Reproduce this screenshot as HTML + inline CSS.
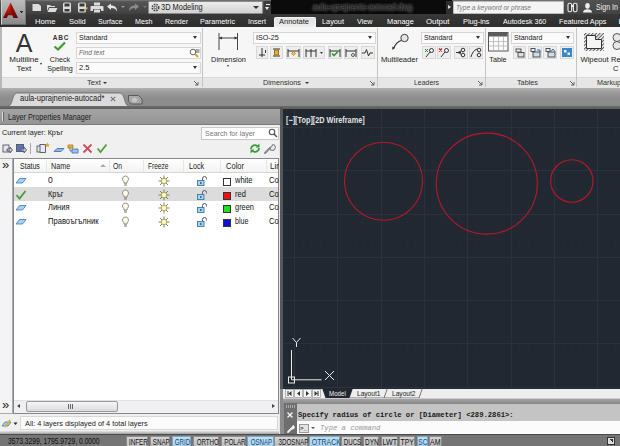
<!DOCTYPE html>
<html><head><meta charset="utf-8">
<style>
*{box-sizing:border-box;margin:0;padding:0}
html,body{width:620px;height:446px;overflow:hidden;background:#8a8a8a;font-family:"Liberation Sans","DejaVu Sans",sans-serif;font-size:8px;color:#222}
.a{position:absolute;white-space:nowrap}
#title{left:0;top:0;width:620px;height:14px;background:linear-gradient(#7a7a7a,#555 12%,#404040)}
#tabs{left:0;top:14px;width:620px;height:13px;background:linear-gradient(#383838,#2d2d2d)}
.tab{top:16px;height:12px;line-height:12px;color:#fff;font-size:8px;position:absolute;white-space:nowrap}
#ribbon{left:0;top:27px;width:620px;height:50px;background:#f6f6f6}
#rtitle{left:0;top:76.5px;width:620px;height:11.5px;background:#e6e6e6;border-top:1px solid #dadada}
.sep{top:28px;width:1px;height:59px;background:#c4c4c4}
.pt{top:78px;height:10px;line-height:10px;font-size:7.5px;color:#333}
.combo{height:11px;background:#fbfbfb;border:1px solid #d6d6d6;font-size:7.5px;line-height:10px;padding-left:2px;color:#222}
.combo:after{content:"";position:absolute;right:3px;top:3px;border:2.5px solid transparent;border-top:3px solid #333;border-bottom:0}
.lbl{font-size:7.5px;line-height:9.3px;margin-top:.5px;text-align:center;color:#222}
.ib{width:12px;height:11px;border:1px solid #d8d8d8;background:#eee}
#band{left:0;top:88px;width:620px;height:18px;background:linear-gradient(#b2b2b2,#9a9a9a 25%,#8e8e8e 55%,#8a8a8a)}
.hs{top:160px;width:1px;height:12px;background:#e6e6e6}
.th{top:161px;font-size:8.5px;line-height:11px;color:#222}
.td{font-size:8.5px;line-height:11px;color:#111}
.nc:after{display:none}
.sbb{top:435.5px;height:11px;background:linear-gradient(#d4d4d4,#bcbcbc);border:1px solid #8c8c8c;border-bottom:0}
.sbb.on{background:linear-gradient(#c0e0f2,#a8d2ea);border-color:#7aa6c2}
.sbt{top:436.5px;font-size:8.5px;line-height:10px;text-align:center;color:#151515}
.sbt.on{color:#1b4a78}
</style></head><body>
<!-- TITLE BAR -->
<div class="a" id="title"></div>
<div class="a" style="left:271px;top:0;width:181px;height:14px;background:#0b0b0b"></div>
<div class="a" style="left: 312.5px; top: 2px; font-size: 8.5px; line-height: 11px; color: rgb(16, 16, 16); text-shadow: rgb(119, 119, 119) 0px 0px 2px, rgb(106, 106, 106) 0px 0px 3px, rgb(85, 85, 85) 0px 0px 4px; transform: scaleX(0.903); transform-origin: 0px 0px;">aula-uprajnenie-autocad.dwg</div>
<!-- quick access icons -->
<svg class="a" style="left:28px;top:1px" width="120" height="13" viewBox="0 0 120 13">
 <g fill="#dcdcdc" stroke="none">
  <path d="M4.500 3h6l2.500 2v5h-8.500z"></path>
  <path d="M19 4h3l1 1h4v1h-6l-2 4zM21.5 7h8l-2 4h-8z"></path>
  <rect x="35" y="1.5" width="8" height="10" rx="1.5"></rect>
  <rect x="50" y="1.5" width="8" height="10" rx="1.5"></rect>
  <path d="M66 1.500h6v3h-6zM63.500 5h11a1 1 0 0 1 1 1v4h-2.500v-2h-8v2h-2.500v-4a1 1 0 0 1 1-1zM66 8.500h6v3h-6z"></path>
 </g>
 <g fill="#3a3a3a"><rect x="36.500" y="2.500" width="5" height="3"></rect><rect x="36.500" y="8" width="5" height="2.500"></rect><rect x="51.500" y="2.500" width="5" height="3"></rect><rect x="51.500" y="8" width="5" height="2.500"></rect></g>
 <path d="M56 9l3-3 1 1-3 3z" fill="#e8a33d"></path>
 <path d="M79 5.500l4-3v2c4 0 6 2 6 6-1-2.500-3-3.500-6-3.500v2z" fill="#e6e6e6"></path>
 <path d="M93 5l2 2 2-2z" fill="#999"></path>
 <path d="M111 5.500l-4-3v2c-4 0-6 2-6 6 1-2.500 3-3.500 6-3.500v2z" fill="#8a8a8a"></path>
 <path d="M115 5l2 2 2-2z" fill="#777"></path>
</svg>
<!-- workspace dropdown -->
<div class="a" style="left:148px;top:1px;width:115px;height:13px;background:linear-gradient(#ececec,#d2d2d2);border:1px solid #8a8a8a;border-radius:1px"></div>
<svg class="a" style="left:150px;top:2px" width="11" height="11" viewBox="0 0 11 11"><circle cx="5.500" cy="5.500" r="3.200" fill="none" stroke="#444" stroke-width="1.600" stroke-dasharray="1.600 1"></circle><circle cx="5.500" cy="5.500" r="1.300" fill="none" stroke="#444" stroke-width=".8"></circle></svg>
<div class="a" style="left: 161px; top: 2px; font-size: 8.5px; line-height: 11px; color: rgb(28, 28, 28); transform: scaleX(0.875); transform-origin: 0px 0px;">3D Modeling</div>
<div class="a" style="left:253px;top:6px;border:3px solid transparent;border-top:3.500px solid #333;border-bottom:0"></div>
<div class="a" style="left:264px;top:1px;width:7px;height:13px;background:#3c3c3c;border-radius:1px"></div>
<div class="a" style="left:265px;top:7px;border:2.500px solid transparent;border-top:3px solid #eee;border-bottom:0"></div>
<div class="a" style="left:265.500px;top:4px;width:4px;height:1px;background:#eee"></div>
<!-- search -->
<div class="a" style="left:446px;top:1px;width:7px;height:13px;background:#2e2e2e"></div>
<div class="a" style="left:448px;top:4.500px;border:2.500px solid transparent;border-left:3.500px solid #ddd;border-right:0"></div>
<div class="a box" style="left:453px;top:1px;width:111px;height:13px;background:#f4f4f4;border:1px solid #bbb;border-radius:1px;font-size:8px;line-height:11px;font-style:italic;color:#777;padding-left:2px"><span style="display: inline-block; transform: scaleX(0.816); transform-origin: 0px 0px;">Type a keyword or phrase</span></div>
<div class="a" style="left:564px;top:0;width:56px;height:14.500px;background:linear-gradient(#525252,#424242)"></div>
<svg class="a" style="left:566px;top:2px" width="30" height="11" viewBox="0 0 30 11">
 <g fill="#3a3a3a" stroke="#eee" stroke-width="1.100"><rect x="2" y="1.200" width="3.600" height="8.600" rx="1.600"></rect><rect x="7.400" y="1.200" width="3.600" height="8.600" rx="1.600"></rect></g><rect x="5" y="3" width="3" height="2" fill="#eee"></rect>
 <g fill="#eee"><ellipse cx="21.500" cy="3.800" rx="2.300" ry="2.900"></ellipse><path d="M17 10.500c0-2.600 2-3.300 4.500-3.300s4.500.7 4.500 3.300z"></path></g></svg>
<div class="a" style="left: 596px; top: 2px; font-size: 8.5px; line-height: 11px; color: rgb(240, 240, 240); transform: scaleX(0.831); transform-origin: 0px 0px;">Sign In</div>
<!-- MENU TABS -->
<div class="a" id="tabs"></div>
<div class="a" style="left:273.500px;top:16.500px;width:42px;height:11px;background:linear-gradient(#e2e2e2,#eee);border:1px solid #f6f6f6;border-bottom:0;border-radius:2px 2px 0 0"></div>
<div class="tab" style="left: 35px; transform: scaleX(0.96); transform-origin: 0px 0px;">Home</div>
<div class="tab" style="left: 69px; transform: scaleX(0.941); transform-origin: 0px 0px;">Solid</div>
<div class="tab" style="left: 98px; transform: scaleX(0.888); transform-origin: 0px 0px;">Surface</div>
<div class="tab" style="left: 135px; transform: scaleX(0.895); transform-origin: 0px 0px;">Mesh</div>
<div class="tab" style="left: 165px; transform: scaleX(0.876); transform-origin: 0px 0px;">Render</div>
<div class="tab" style="left: 200px; transform: scaleX(0.905); transform-origin: 0px 0px;">Parametric</div>
<div class="tab" style="left: 248px; transform: scaleX(0.899); transform-origin: 0px 0px;">Insert</div>
<div class="tab" style="left: 279px; color: rgb(34, 34, 34); transform: scaleX(0.937); transform-origin: 0px 0px;">Annotate</div>
<div class="tab" style="left: 322px; transform: scaleX(0.915); transform-origin: 0px 0px;">Layout</div>
<div class="tab" style="left: 357px; transform: scaleX(0.901); transform-origin: 0px 0px;">View</div>
<div class="tab" style="left: 387px; transform: scaleX(0.925); transform-origin: 0px 0px;">Manage</div>
<div class="tab" style="left: 426px; transform: scaleX(0.979); transform-origin: 0px 0px;">Output</div>
<div class="tab" style="left: 463px; transform: scaleX(0.917); transform-origin: 0px 0px;">Plug-ins</div>
<div class="tab" style="left: 503px; transform: scaleX(0.884); transform-origin: 0px 0px;">Autodesk 360</div>
<div class="tab" style="left: 559px; transform: scaleX(0.913); transform-origin: 0px 0px;">Featured Apps</div>
<div class="tab" style="left:618.500px">E</div>
<!-- app button -->
<div class="a" style="left:1px;top:0;width:25px;height:24.500px;background:linear-gradient(#bcbcbc,#a6a6a6 50%,#888);border:1px solid #d0d0d0;border-top:0;border-right-color:#777;border-bottom-color:#666"></div>
<svg class="a" style="left:0;top:0" width="26" height="25" viewBox="0 0 26 25">
 <defs><linearGradient id="ag" x1="0" y1="0" x2="0" y2="1"><stop offset="0" stop-color="#e83020"></stop><stop offset=".55" stop-color="#b8140c"></stop><stop offset="1" stop-color="#5e0a06"></stop></linearGradient></defs>
 <path d="M10.500 2.500L18 18h-4.500l-1.100-2.800h-4.200L6.800 18H3z" fill="url(#ag)"></path>
 <path d="M10.500 2.500L18 18h-4.500l-3-8.500z" fill="#6a0a06" opacity=".55"></path>
 <path d="M19.800 11l1.700 2.200 1.700-2.200z" fill="#1a1a1a"></path>
</svg>
<!-- RIBBON -->
<div class="a" id="ribbon"></div>
<div class="a" id="rtitle"></div>
<div class="a" style="left:0;top:27px;width:2px;height:61px;background:#b8b8b8"></div>
<div class="a sep" style="left:202px"></div>
<div class="a sep" style="left:377px"></div>
<div class="a sep" style="left:485px"></div>
<div class="a sep" style="left:576px"></div>
<!-- Text panel -->
<div class="a" style="left:14px;top:28.500px;width:20px;font-size:25px;line-height:28px;color:#333;text-align:center">A</div>
<div class="a lbl" style="left: 4px; top: 54px; width: 40px; transform: scaleX(1.072); transform-origin: 50% 0px;">Multiline<br>Text</div>
<div class="a" style="left:40px;top:63px;border:1.500px solid transparent;border-top:2px solid #333;border-bottom:0"></div>
<div class="a" style="left:51px;top:34px;width:20px;font-size:6.500px;line-height:7px;font-weight:bold;letter-spacing:.8px;color:#333;text-align:center">ABC</div>
<svg class="a" style="left:53px;top:41px" width="14" height="10" viewBox="0 0 14 10"><path d="M1.500 5.500l3.500 3L12 1.500" fill="none" stroke="#3c9b2c" stroke-width="2.200"></path></svg>
<div class="a lbl" style="left: 44px; top: 54px; width: 32px; transform: scaleX(0.952); transform-origin: 50% 0px;">Check<br>Spelling</div>
<div class="a combo" style="left:76px;top:32px;width:125px;height:12px"><span style="display: inline-block; transform: scaleX(0.936); transform-origin: 0px 0px;">Standard</span></div>
<div class="a combo nc" style="left:76px;top:47px;width:125px;height:12px;font-style:italic;color:#666"><span style="display: inline-block; transform: scaleX(0.88); transform-origin: 0px 0px;">Find text</span></div>
<svg class="a" style="left:189px;top:48px" width="11" height="10" viewBox="0 0 11 10"><circle cx="4" cy="4" r="2.800" fill="#fff" stroke="#666" stroke-width="1"></circle><path d="M6 6l3 3" stroke="#c9a227" stroke-width="1.800"></path><path d="M6.500 2h4M6.500 4h4" stroke="#555" stroke-width="1"></path></svg>
<div class="a combo" style="left:76px;top:62px;width:125px;height:12px"><span style="display: inline-block; transform: scaleX(1.006); transform-origin: 0px 0px;">2.5</span></div>
<div class="a pt" style="left: 87px; transform: scaleX(1.01); transform-origin: 0px 0px;">Text</div>
<div class="a" style="left:103px;top:82px;border:2px solid transparent;border-top:2.500px solid #333;border-bottom:0"></div>
<svg class="a" style="left:194px;top:81px" width="5" height="5" viewBox="0 0 5 5"><path d="M0 0l4 4M4 1v3h-3" fill="none" stroke="#555" stroke-width=".9"></path></svg>
<!-- Dimensions panel -->
<svg class="a" style="left:218px;top:33px" width="21" height="18" viewBox="0 0 21 18"><path d="M1 0v17M19.500 0v17M1 5h18.500" fill="none" stroke="#444" stroke-width="1"></path><path d="M1 5l3-1.500v3zM19.500 5l-3-1.500v3z" fill="#333"></path></svg>
<div class="a lbl" style="left: 208px; top: 54px; width: 41px; transform: scaleX(0.985); transform-origin: 50% 0px;">Dimension</div>
<div class="a" style="left:227px;top:65px;border:1.500px solid transparent;border-top:2px solid #333;border-bottom:0"></div>
<div class="a combo" style="left:253px;top:32px;width:123px;height:12px"><span style="display: inline-block; transform: scaleX(0.955); transform-origin: 0px 0px;">ISO-25</span></div>
<div class="a ib" style="left:256px;top:46px;width:12px;height:13px"></div>
<div class="a ib" style="left:270px;top:46px;width:13px;height:13px"></div>
<div class="a ib" style="left:286px;top:46px;width:15px;height:13px"></div>
<div class="a ib" style="left:303px;top:46px;width:22px;height:13px"></div>
<div class="a ib" style="left:328px;top:46px;width:14px;height:13px"></div>
<div class="a ib" style="left:344px;top:46px;width:14px;height:13px"></div>
<div class="a ib" style="left:361px;top:46px;width:14px;height:13px"></div>
<svg class="a" style="left:256px;top:46px" width="120" height="13" viewBox="0 0 120 13">
 <g fill="none" stroke="#333" stroke-width="1">
  <path d="M6 2v9M3 9h6M9.500 4v3"></path>
  <path d="M17 3h7M17 10h7"></path><rect x="18.500" y="4" width="4" height="5" fill="#e0b040" stroke="#a07010"></rect>
  <path d="M32 3v8M43 3v8M32 5h11"></path><path d="M37.500 5.500l2 2-2 2-2-2z" fill="#f0c040" stroke="#b08010" stroke-width=".7"></path>
  <path d="M50 3v8M55 3v8M60 3v8M50 5h10"></path>
  <path d="M74 3v8M84 3v8M74 5h10"></path>
  <path d="M90 3v8M100 3v8M90 5h10"></path><circle cx="97" cy="9" r="1.500" stroke-width=".8"></circle>
  <path d="M106 7h3l1.500-3.500 2 6.500 1.500-3h3"></path>
 </g>
 <path d="M76 7.500l2 2 4-4" fill="none" stroke="#2e9a2e" stroke-width="1.600"></path>
 <path d="M64 6l1.500 2 1.500-2z" fill="#333"></path>
</svg>
<div class="a pt" style="left: 263px; transform: scaleX(0.967); transform-origin: 0px 0px;">Dimensions</div>
<div class="a" style="left:305px;top:82px;border:2px solid transparent;border-top:2.500px solid #333;border-bottom:0"></div>
<svg class="a" style="left:370px;top:81px" width="5" height="5" viewBox="0 0 5 5"><path d="M0 0l4 4M4 1v3h-3" fill="none" stroke="#555" stroke-width=".9"></path></svg>
<!-- Leaders -->
<svg class="a" style="left:391px;top:32px" width="19" height="19" viewBox="0 0 19 19"><circle cx="13.500" cy="6" r="3.700" fill="#e4e4e4" stroke="#444" stroke-width="1"></circle><path d="M10.500 8.500c-4 1-6.500 4-8 8.500" fill="none" stroke="#333" stroke-width="1.200"></path><path d="M1.200 18l.2-3.500 2.300 1.200z" fill="#333"></path></svg>
<div class="a lbl" style="left: 378px; top: 54px; width: 43px; transform: scaleX(1.011); transform-origin: 50% 0px;">Multileader</div>
<div class="a combo" style="left:421px;top:32px;width:63px;height:12px"><span style="display: inline-block; transform: scaleX(0.936); transform-origin: 0px 0px;">Standard</span></div>
<div class="a ib" style="left:422px;top:46px;width:14px;height:13px"></div>
<div class="a ib" style="left:437px;top:46px;width:14px;height:13px"></div>
<div class="a ib" style="left:454px;top:46px;width:14px;height:13px"></div>
<div class="a ib" style="left:469px;top:46px;width:14px;height:13px"></div>
<svg class="a" style="left:422px;top:46px" width="62" height="13" viewBox="0 0 62 13">
 <g fill="none" stroke="#333" stroke-width="1">
  <circle cx="9.500" cy="4.500" r="2"></circle><path d="M8 6l-4 5"></path>
  <circle cx="24.500" cy="4.500" r="2"></circle><path d="M23 6l-4 5"></path>
  <circle cx="41" cy="4" r="1.800"></circle><circle cx="41" cy="9" r="1.800"></circle><path d="M34 6.500h5M39 5l-3 1.500 3 1.500"></path>
  <circle cx="57" cy="4" r="1.800"></circle><circle cx="57" cy="9" r="1.800"></circle><path d="M49 11c1-4 3-7 6-8"></path>
 </g>
 <path d="M3 3l3 3M6 3l-3 3" stroke="#2a8a2a" stroke-width="1" fill="none"></path>
 <path d="M17 2.500l3 3M20 2.500l-3 3" stroke="#d02020" stroke-width="1.200" fill="none"></path>
</svg>
<div class="a pt" style="left: 414px; transform: scaleX(0.922); transform-origin: 0px 0px;">Leaders</div>
<svg class="a" style="left:478px;top:81px" width="5" height="5" viewBox="0 0 5 5"><path d="M0 0l4 4M4 1v3h-3" fill="none" stroke="#555" stroke-width=".9"></path></svg>
<!-- Tables -->
<svg class="a" style="left:488px;top:32px" width="21" height="20" viewBox="0 0 21 20"><rect x=".5" y=".5" width="19.500" height="18.500" fill="#fafafa" stroke="#555"></rect><rect x="1" y="1" width="18.500" height="3.500" fill="#5a5a5a"></rect><path d="M1 9.500h19M1 14h19M5.500 5v14M10.500 5v14M15.500 5v14" stroke="#b4b4b4" stroke-width=".8" fill="none"></path></svg>
<div class="a lbl" style="left: 486px; top: 54px; width: 24px; transform: scaleX(0.964); transform-origin: 50% 0px;">Table</div>
<div class="a combo" style="left:511px;top:32px;width:63px;height:12px"><span style="display: inline-block; transform: scaleX(0.936); transform-origin: 0px 0px;">Standard</span></div>
<div class="a ib" style="left:513px;top:46px;width:13px;height:13px"></div>
<div class="a ib" style="left:528px;top:46px;width:14px;height:13px"></div>
<div class="a ib" style="left:543px;top:46px;width:14px;height:13px"></div>
<div class="a ib" style="left:560px;top:46px;width:14px;height:13px"></div>
<svg class="a" style="left:513px;top:46px" width="62" height="13" viewBox="0 0 62 13">
 <g fill="none" stroke="#444" stroke-width=".9">
  <rect x="3" y="3" width="5" height="3"></rect><rect x="5" y="6.500" width="6" height="4.500" fill="#ddd"></rect>
  <rect x="18" y="2.500" width="4" height="3"></rect><rect x="20" y="6" width="7" height="5" fill="#cde"></rect>
  <rect x="33" y="2.500" width="4" height="3"></rect><rect x="35" y="6" width="7" height="5" fill="#cde"></rect>
 </g>
 <path d="M24 4h3v2" stroke="#2a6ab0" fill="none" stroke-width="1"></path><path d="M38 5.500l2-2.500 2 2.500" stroke="#2a6ab0" fill="none" stroke-width="1"></path>
 <rect x="49" y="2" width="10" height="9" fill="#3a86c8"></rect><path d="M51 4h2.500v2.500h-2.500zM54.500 6.500h2.500v2.500h-2.500z" fill="#e8f2fb"></path>
</svg>
<div class="a pt" style="left: 517px; transform: scaleX(0.964); transform-origin: 0px 0px;">Tables</div>
<svg class="a" style="left:570px;top:81px" width="5" height="5" viewBox="0 0 5 5"><path d="M0 0l4 4M4 1v3h-3" fill="none" stroke="#555" stroke-width=".9"></path></svg>
<!-- Markup -->
<svg class="a" style="left:583px;top:32px" width="22" height="20" viewBox="0 0 22 20">
 <defs><pattern id="hp" width="2.500" height="2.500" patternUnits="userSpaceOnUse" patternTransform="rotate(45)"><rect width="1" height="2.500" fill="#555"></rect></pattern></defs>
 <rect x="1" y="1" width="20" height="18" fill="url(#hp)"></rect>
 <path d="M3.500 3.500h9v4h6v9h-15z" fill="#f4f4f4" stroke="#333" stroke-width="1"></path></svg>
<div class="a lbl" style="left: 578px; top: 54px; width: 33px; transform: scaleX(1.025); transform-origin: 50% 0px;">Wipeout</div>
<svg class="a" style="left:611px;top:33px" width="9" height="18" viewBox="0 0 9 18"><circle cx="6" cy="4.500" r="4" fill="#e8e8e8" stroke="#555"></circle><circle cx="6" cy="12.500" r="4" fill="#e8e8e8" stroke="#555"></circle></svg>
<div class="a lbl" style="left:611px;top:54px;text-align:left">Re<br>&nbsp;C</div>
<div class="a pt" style="left: 597px; transform: scaleX(0.959); transform-origin: 0px 0px;">Markup</div>
<!-- FILE TAB BAND -->
<div class="a" id="band"></div>
<svg class="a" style="left:6px;top:91px" width="140" height="16" viewBox="0 0 140 16">
 <path d="M0 15.500c4 0 5-2 6.500-7s2.500-6.500 6-6.500h100c3.500 0 4.500 1.500 6 6.500s2.500 7 6.500 7z" fill="#dadada" stroke="#666" stroke-width=".8"></path>
 <path d="M122.500 4.500h10l3.500 3.500v5h-11l-2.500-3z" fill="#a8a8a8" stroke="#5a5a5a" stroke-width="1" stroke-linejoin="round"></path>
 <circle cx="128.500" cy="9" r="2.500" fill="#c4c4c4"></circle>
</svg>
<div class="a" style="left: 20px; top: 93px; font-size: 8.5px; line-height: 11px; color: rgb(26, 26, 26); transform: scaleX(0.889); transform-origin: 0px 0px;">aula-uprajnenie-autocad*</div>
<svg class="a" style="left:110px;top:96px" width="6" height="6" viewBox="0 0 6 6"><path d="M.8.800l4.400 4.400M5.200.800L.8 5.200" stroke="#777" stroke-width="1.100"></path></svg>
<div class="a" style="left:0;top:105.500px;width:620px;height:4px;background:linear-gradient(#6c6c6c,#575757)"></div>
<!-- LAYER PANEL -->
<div class="a" style="left:0;top:108.500px;width:280px;height:325.500px;background:#f0f0f0"></div>
<div class="a" style="left:0;top:108.500px;width:280px;height:16.500px;background:linear-gradient(#a4a4a4,#959595);border-bottom:1px solid #7c7c7c"></div>
<div class="a" style="left:2px;top:112px;width:2px;height:9px;background:#ddd;border-right:1px solid #666"></div>
<div class="a" style="left: 8px; top: 112px; font-size: 8.5px; line-height: 11px; color: rgb(28, 28, 28); transform: scaleX(0.845); transform-origin: 0px 0px;">Layer Properties Manager</div>
<div class="a" style="left: 2px; top: 128px; font-size: 8px; line-height: 10px; color: rgb(34, 34, 34); transform: scaleX(0.901); transform-origin: 0px 0px;">Current layer: Кръг</div>
<div class="a box" style="left:201px;top:126.500px;width:77.500px;height:13.500px;background:#fff;border:1px solid #c8c8c8;font-size:8px;line-height:12px;color:#777;padding-left:3px"><span style="display: inline-block; transform: scaleX(0.885); transform-origin: 0px 0px;">Search for layer</span></div>
<svg class="a" style="left:268px;top:128px" width="10" height="10" viewBox="0 0 10 10"><circle cx="4" cy="4" r="2.700" fill="none" stroke="#555" stroke-width="1.100"></circle><path d="M6 6l3 3" stroke="#555" stroke-width="1.500"></path></svg>
<!-- toolbar icons -->
<svg class="a" style="left:0;top:142px" width="281" height="13" viewBox="0 0 281 13">
 <g fill="#e4e8ee" stroke="#556" stroke-width=".9">
  <rect x="3" y="3" width="6" height="7"></rect><path d="M7 7h3v-2l2.500 3-2.500 3v-2h-3z" fill="#ccd"></path>
  <rect x="16.500" y="2.500" width="7" height="7" fill="#5678b0"></rect><path d="M21 7h3v-2l2.500 3-2.500 3v-2h-3z" fill="#ccd"></path>
  <rect x="37" y="4" width="5" height="6"></rect><rect x="40" y="2.500" width="5.500" height="8"></rect>
 </g>
 <path d="M30.500 1v11" stroke="#aaa" stroke-width="1"></path>
 <path d="M54 9.500l3-3h7l-3 3z" fill="#8cb8e8" stroke="#3a6aa8" stroke-width=".8"></path><path d="M58 2l1 2 2 .3-1.500 1.400.4 2-1.900-1-1.900 1 .4-2L55 4.300l2-.3z" fill="#f0a020" transform="translate(1 -1) scale(.8)"></path>
 <path d="M68 3h5v3h-5z" fill="#f0b040" stroke="#a06a10" stroke-width=".7"></path><path d="M72 7h6v4h-6z" fill="#9cc4ee" stroke="#3a6aa8" stroke-width=".8"></path><path d="M70 6v3h2" fill="none" stroke="#3a6aa8" stroke-width=".8"></path>
 <path d="M83.500 2.500l8 8M91.500 2.500l-8 8" stroke="#d04a58" stroke-width="1.800"></path>
 <path d="M97.500 6.500l3 3.500 6-7.500" fill="none" stroke="#5a9e44" stroke-width="1.900"></path>
 <path d="M251 7a4 4 0 0 1 7-2.500M259 6a4 4 0 0 1-7 2.500" fill="none" stroke="#3a9a3a" stroke-width="1.700"></path><path d="M259.500 1.500v4h-4zM250.500 11.500v-4h4z" fill="#3a9a3a"></path>
 <path d="M265 11l5-5" stroke="#888" stroke-width="2" stroke-linecap="round"></path><path d="M269.500 6.500a3 3 0 1 0 3.500-4l-1.500 2z" fill="none" stroke="#888" stroke-width="1.200"></path>
</svg>
<!-- left strip -->
<div class="a" style="left:0;top:158px;width:13px;height:256px;background:#f4f4f4;border:1px solid #aaa;border-left:0"></div>
<div class="a" style="left:2px;top:158px;font-size:13px;line-height:14px;color:#222">»</div>
<div class="a" style="left:2px;top:398px;font-size:13px;line-height:14px;color:#222">»</div>
<!-- table -->
<div class="a" style="left:13px;top:158px;width:266px;height:256px;background:#fff;border:1px solid #828790"></div>
<div class="a" style="left:14px;top:159px;width:264px;height:14px;background:linear-gradient(#fff,#f3f3f3);border-bottom:1px solid #d5d5d5"></div>
<div class="a" style="left:14px;top:187px;width:264px;height:14px;background:#dcdcdc"></div>
<div class="a hs" style="left:46px"></div><div class="a hs" style="left:109px"></div><div class="a hs" style="left:143px"></div><div class="a hs" style="left:183px"></div><div class="a hs" style="left:220px"></div><div class="a hs" style="left:266px"></div>
<div class="a th" style="left: 20px; transform: scaleX(0.825); transform-origin: 0px 0px;">Status</div>
<div class="a th" style="left: 51px; transform: scaleX(0.846); transform-origin: 0px 0px;">Name</div>
<div class="a" style="left:100px;top:164px;border:3px solid transparent;border-bottom:3.500px solid #aaa;border-top:0"></div>
<div class="a th" style="left: 113px; transform: scaleX(0.793); transform-origin: 0px 0px;">On</div>
<div class="a th" style="left: 148px; transform: scaleX(0.774); transform-origin: 0px 0px;">Freeze</div>
<div class="a th" style="left: 189px; transform: scaleX(0.846); transform-origin: 0px 0px;">Lock</div>
<div class="a th" style="left: 226px; transform: scaleX(0.886); transform-origin: 0px 0px;">Color</div>
<div class="a th" style="left: 270px; transform: scaleX(0.926); transform-origin: 0px 0px;">Lin</div>
<svg class="a" style="left:15px;top:176px" width="12" height="9" viewBox="0 0 12 9"><path d="M1 7l3.500-4.500h6.500l-3.500 4.500z" fill="#a8d0f0" stroke="#3a78b8" stroke-width=".8"></path></svg>
<div class="a td" style="left:48px;top:175px">0</div>
<svg class="a" style="left:121px;top:175px" width="9" height="12" viewBox="0 0 9 12"><path d="M4.500 1a3 3 0 0 1 1.800 5.400l-.3 1.600h-3l-.3-1.600A3 3 0 0 1 4.500 1z" fill="#fdfbe0" stroke="#777" stroke-width=".8"></path><path d="M3 9h3M3.300 10.300h2.400" stroke="#777" stroke-width=".8"></path></svg>
<svg class="a" style="left:158px;top:175px" width="12" height="12" viewBox="0 0 12 12"><g stroke="#7a7a50" stroke-width=".9"><path d="M6 .5v11M.5 6h11M2 2l8 8M10 2l-8 8"></path></g><circle cx="6" cy="6" r="2.800" fill="#fff8b0" stroke="#8a8a50" stroke-width=".7"></circle></svg>
<svg class="a" style="left:196px;top:175px" width="12" height="12" viewBox="0 0 12 12"><path d="M6.500 5.500v-2a2 2 0 0 1 4 0v1" fill="none" stroke="#557" stroke-width="1"></path><rect x="1.500" y="5.500" width="6.500" height="5" fill="#a8d4ec" stroke="#3a7aa6" stroke-width=".9"></rect><rect x="4" y="7" width="1.500" height="2" fill="#2a6a9a"></rect></svg>
<div class="a" style="left:223px;top:178px;width:8px;height:8px;background:#ffffff;border:1px solid #333"></div>
<div class="a td" style="left: 235px; top: 175px; transform: scaleX(0.882); transform-origin: 0px 0px;">white</div>
<div class="a td" style="left: 269px; top: 175px; transform: scaleX(0.901); transform-origin: 0px 0px;">Co</div>
<svg class="a" style="left:15px;top:188.5px" width="12" height="11" viewBox="0 0 12 11"><path d="M1.500 6l3 3.500 6-7.500" fill="none" stroke="#4a9a3a" stroke-width="1.800"></path></svg>
<div class="a td" style="left: 48px; top: 188.5px; transform: scaleX(0.857); transform-origin: 0px 0px;">Кръг</div>
<svg class="a" style="left:121px;top:188.5px" width="9" height="12" viewBox="0 0 9 12"><path d="M4.500 1a3 3 0 0 1 1.800 5.400l-.3 1.600h-3l-.3-1.600A3 3 0 0 1 4.500 1z" fill="#fdfbe0" stroke="#777" stroke-width=".8"></path><path d="M3 9h3M3.300 10.300h2.400" stroke="#777" stroke-width=".8"></path></svg>
<svg class="a" style="left:158px;top:188.5px" width="12" height="12" viewBox="0 0 12 12"><g stroke="#7a7a50" stroke-width=".9"><path d="M6 .5v11M.5 6h11M2 2l8 8M10 2l-8 8"></path></g><circle cx="6" cy="6" r="2.800" fill="#fff8b0" stroke="#8a8a50" stroke-width=".7"></circle></svg>
<svg class="a" style="left:196px;top:188.5px" width="12" height="12" viewBox="0 0 12 12"><path d="M6.500 5.500v-2a2 2 0 0 1 4 0v1" fill="none" stroke="#557" stroke-width="1"></path><rect x="1.500" y="5.500" width="6.500" height="5" fill="#a8d4ec" stroke="#3a7aa6" stroke-width=".9"></rect><rect x="4" y="7" width="1.500" height="2" fill="#2a6a9a"></rect></svg>
<div class="a" style="left:223px;top:191.5px;width:8px;height:8px;background:#f01010;border:1px solid #333"></div>
<div class="a td" style="left: 235px; top: 188.5px; transform: scaleX(0.878); transform-origin: 0px 0px;">red</div>
<div class="a td" style="left: 269px; top: 188.5px; transform: scaleX(0.901); transform-origin: 0px 0px;">Co</div>
<svg class="a" style="left:15px;top:203px" width="12" height="9" viewBox="0 0 12 9"><path d="M1 7l3.500-4.500h6.500l-3.500 4.500z" fill="#a8d0f0" stroke="#3a78b8" stroke-width=".8"></path></svg>
<div class="a td" style="left: 48px; top: 202px; transform: scaleX(0.882); transform-origin: 0px 0px;">Линия</div>
<svg class="a" style="left:121px;top:202px" width="9" height="12" viewBox="0 0 9 12"><path d="M4.500 1a3 3 0 0 1 1.800 5.400l-.3 1.600h-3l-.3-1.600A3 3 0 0 1 4.500 1z" fill="#fdfbe0" stroke="#777" stroke-width=".8"></path><path d="M3 9h3M3.300 10.300h2.400" stroke="#777" stroke-width=".8"></path></svg>
<svg class="a" style="left:158px;top:202px" width="12" height="12" viewBox="0 0 12 12"><g stroke="#7a7a50" stroke-width=".9"><path d="M6 .5v11M.5 6h11M2 2l8 8M10 2l-8 8"></path></g><circle cx="6" cy="6" r="2.800" fill="#fff8b0" stroke="#8a8a50" stroke-width=".7"></circle></svg>
<svg class="a" style="left:196px;top:202px" width="12" height="12" viewBox="0 0 12 12"><path d="M6.500 5.500v-2a2 2 0 0 1 4 0v1" fill="none" stroke="#557" stroke-width="1"></path><rect x="1.500" y="5.500" width="6.500" height="5" fill="#a8d4ec" stroke="#3a7aa6" stroke-width=".9"></rect><rect x="4" y="7" width="1.500" height="2" fill="#2a6a9a"></rect></svg>
<div class="a" style="left:223px;top:205px;width:8px;height:8px;background:#20e020;border:1px solid #333"></div>
<div class="a td" style="left: 235px; top: 202px; transform: scaleX(0.874); transform-origin: 0px 0px;">green</div>
<div class="a td" style="left: 269px; top: 202px; transform: scaleX(0.901); transform-origin: 0px 0px;">Co</div>
<svg class="a" style="left:15px;top:216.5px" width="12" height="9" viewBox="0 0 12 9"><path d="M1 7l3.500-4.500h6.500l-3.500 4.500z" fill="#a8d0f0" stroke="#3a78b8" stroke-width=".8"></path></svg>
<div class="a td" style="left: 48px; top: 215.5px; transform: scaleX(0.893); transform-origin: 0px 0px;">Правоъгълник</div>
<svg class="a" style="left:121px;top:215.5px" width="9" height="12" viewBox="0 0 9 12"><path d="M4.500 1a3 3 0 0 1 1.800 5.400l-.3 1.600h-3l-.3-1.600A3 3 0 0 1 4.500 1z" fill="#fdfbe0" stroke="#777" stroke-width=".8"></path><path d="M3 9h3M3.300 10.300h2.400" stroke="#777" stroke-width=".8"></path></svg>
<svg class="a" style="left:158px;top:215.5px" width="12" height="12" viewBox="0 0 12 12"><g stroke="#7a7a50" stroke-width=".9"><path d="M6 .5v11M.5 6h11M2 2l8 8M10 2l-8 8"></path></g><circle cx="6" cy="6" r="2.800" fill="#fff8b0" stroke="#8a8a50" stroke-width=".7"></circle></svg>
<svg class="a" style="left:196px;top:215.5px" width="12" height="12" viewBox="0 0 12 12"><path d="M6.500 5.500v-2a2 2 0 0 1 4 0v1" fill="none" stroke="#557" stroke-width="1"></path><rect x="1.500" y="5.500" width="6.500" height="5" fill="#a8d4ec" stroke="#3a7aa6" stroke-width=".9"></rect><rect x="4" y="7" width="1.500" height="2" fill="#2a6a9a"></rect></svg>
<div class="a" style="left:223px;top:218.5px;width:8px;height:8px;background:#1010d0;border:1px solid #333"></div>
<div class="a td" style="left: 235px; top: 215.5px; transform: scaleX(0.84); transform-origin: 0px 0px;">blue</div>
<div class="a td" style="left: 269px; top: 215.5px; transform: scaleX(0.901); transform-origin: 0px 0px;">Co</div>
<!-- h scrollbar -->
<div class="a" style="left:14px;top:400px;width:264px;height:13px;background:#f0f0f0;border-top:1px solid #e2e2e2"></div>
<div class="a" style="left:26px;top:401px;width:92px;height:11px;background:linear-gradient(#f6f6f6,#dcdcdc);border:1px solid #9a9a9a;border-radius:2px"></div>
<div class="a" style="left:68px;top:404px;width:1px;height:5px;background:#666;box-shadow:2px 0 0 #666,4px 0 0 #666"></div>
<div class="a" style="left:17px;top:404px;border:2.500px solid transparent;border-right:3px solid #444;border-left:0"></div>
<div class="a" style="left:272px;top:404px;border:2.500px solid transparent;border-left:3px solid #444;border-right:0"></div>
<!-- status line -->
<div class="a" style="left:0;top:414px;width:281px;height:20px;background:#f0f0f0"></div>
<div class="a" style="left:20px;top:416px;width:258px;height:14px;background:#fbfbfb;border:1px solid #d8d8d8"></div>
<svg class="a" style="left:1px;top:417px" width="18" height="13" viewBox="0 0 18 13"><path d="M1 9l3-4h6l-3 4z" fill="#a8d0f0" stroke="#3a78b8" stroke-width=".8"></path><path d="M4 10l5-7" stroke="#e0b020" stroke-width="1.600"></path><path d="M12.500 5.500l2 2.500 2-2.500z" fill="#222"></path></svg>
<div class="a" style="left: 24.5px; top: 418.5px; font-size: 8px; line-height: 10px; color: rgb(34, 34, 34); transform: scaleX(0.916); transform-origin: 0px 0px;">All: 4 layers displayed of 4 total layers</div>
<div class="a" style="left:0;top:431px;width:280px;height:3.500px;background:linear-gradient(#e4e4e4,#8a8a8a)"></div>
<!-- panel right border -->
<div class="a" style="left:278.500px;top:125px;width:1.500px;height:309px;background:#e4e4e4"></div>
<div class="a" style="left:279.700px;top:107px;width:3.300px;height:282px;background:#585858"></div>
<div class="a" style="left:279.500px;top:389px;width:4px;height:45px;background:#8c8c8c"></div>
<!-- DRAWING -->
<svg class="a" style="left:283px;top:109px" width="337" height="280" viewBox="283 109 337 280">
<rect x="283" y="109" width="337" height="280" fill="#212831"></rect>
<path d="M285.5 109V389M303.5 109V389M311.5 109V389M320.5 109V389M329.5 109V389M346.5 109V389M355.5 109V389M363.5 109V389M372.5 109V389M389.5 109V389M398.5 109V389M407.5 109V389M415.5 109V389M433.5 109V389M441.5 109V389M450.5 109V389M459.5 109V389M476.5 109V389M485.5 109V389M493.5 109V389M502.5 109V389M519.5 109V389M528.5 109V389M537.5 109V389M545.5 109V389M563.5 109V389M571.5 109V389M580.5 109V389M589.5 109V389M606.5 109V389M615.5 109V389M283 110.5H620M283 118.5H620M283 136.5H620M283 144.5H620M283 153.5H620M283 162.5H620M283 179.5H620M283 188.5H620M283 196.5H620M283 205.5H620M283 222.5H620M283 231.5H620M283 239.5H620M283 248.5H620M283 265.5H620M283 274.5H620M283 283.5H620M283 291.5H620M283 309.5H620M283 317.5H620M283 326.5H620M283 335.5H620M283 352.5H620M283 361.5H620M283 369.5H620M283 378.5H620" stroke="#232a33" stroke-width="1" fill="none"></path>
<path d="M294.5 109V389M337.5 109V389M381.5 109V389M424.5 109V389M467.5 109V389M511.5 109V389M554.5 109V389M597.5 109V389M283 127.5H620M283 170.5H620M283 214.5H620M283 257.5H620M283 300.5H620M283 343.5H620M283 387.5H620" stroke="#2b323c" stroke-width="1" fill="none"></path>
<g fill="none" stroke="#b8182a" stroke-width="1.100"><circle cx="383.500" cy="181.300" r="39"></circle><circle cx="486.800" cy="183.600" r="50.500"></circle><circle cx="571.800" cy="181" r="21.200"></circle></g>
<g fill="none" stroke="#e8e8e8" stroke-width="1"><path d="M291.500 350V379.800H321.600"></path><rect x="288.500" y="377" width="6" height="6"></rect><path d="M292.500 338l4 4.500 4-4.500M296.500 342.500v4.500M325 371l9 9M334 371l-9 9"></path></g>
</svg>
<div class="a" style="left:285.500px;top:114.500px;font-size:8.700px;line-height:10px;font-weight:bold;color:#e4e4e4;transform:scaleX(.84);transform-origin:0 0">[−][Top][2D Wireframe]</div>
<!-- MODEL TABS -->
<div class="a" style="left:283px;top:388.500px;width:337px;height:10px;background:#eee"></div>
<svg class="a" style="left:284px;top:388px" width="145" height="11" viewBox="0 0 145 11">
 <g fill="#f4f4f4" stroke="#999" stroke-width=".7"><rect x="1.500" y="1.500" width="8" height="8"></rect><rect x="10.500" y="1.500" width="8" height="8"></rect><rect x="19.500" y="1.500" width="8" height="8"></rect><rect x="28.500" y="1.500" width="8" height="8"></rect></g>
 <g fill="#333"><path d="M7.500 3v5l-3-2.500zM3.500 3h1v5h-1z"></path><path d="M16 3v5l-3-2.500z"></path><path d="M22 3v5l3-2.500z"></path><path d="M30.500 3v5l3-2.500zM33.500 3h1v5h-1z"></path></g>
 <path d="M38 0h31l-3.500 10h-24z" fill="#212831"></path>
 <path d="M103.500 0l-3.500 10h-34M138.500 0l-3.500 10h-35" fill="none" stroke="#555" stroke-width=".8"></path>
</svg>
<div class="a" style="left: 329px; top: 388.5px; font-size: 8px; line-height: 10px; color: rgb(240, 240, 240); transform: scaleX(0.771); transform-origin: 0px 0px;">Model</div>
<div class="a" style="left: 356.6px; top: 388.5px; font-size: 8px; line-height: 10px; color: rgb(34, 34, 34); transform: scaleX(0.822); transform-origin: 0px 0px;">Layout1</div>
<div class="a" style="left: 391.5px; top: 388.5px; font-size: 8px; line-height: 10px; color: rgb(34, 34, 34); transform: scaleX(0.825); transform-origin: 0px 0px;">Layout2</div>
<!-- COMMAND -->
<div class="a" style="left:283px;top:398px;width:337px;height:5px;background:linear-gradient(#f4f4f4,#a4a4a4 20%,#8c8c8c)"></div>
<div class="a" style="left:284px;top:402.5px;width:13px;height:32px;background:#6e6e6e"></div>
<div class="a" style="left:286px;top:404.5px;width:9px;height:3px;background:repeating-linear-gradient(90deg,#aaa 0 1px,transparent 1px 2px)"></div>
<svg class="a" style="left:286px;top:410px" width="9" height="24" viewBox="0 0 9 24"><path d="M1.500 2.500l5 5M6.500 2.500l-5 5" stroke="#f4f4f4" stroke-width="1.400"></path><path d="M2 22l3.500-3.500" stroke="#f4f4f4" stroke-width="1.800" stroke-linecap="round"></path><path d="M4.500 18.500a2.300 2.300 0 1 0 2.500-3.500l-1 1.800z" fill="#f4f4f4"></path></svg>
<div class="a" style="left:297px;top:403.5px;width:323px;height:17px;background:#c4c4c4"></div>
<div class="a" style="left:298px;top:409.5px;font-family:'Liberation Mono','DejaVu Sans Mono',monospace;font-size:7.200px;line-height:10px;font-weight:bold;color:#1a1a1a">Specify radius of circle or [Diameter] &lt;289.2861&gt;:</div>
<div class="a" style="left:297px;top:420.5px;width:323px;height:14px;background:#fbfbfb"></div>
<div class="a" style="left:299px;top:423.5px;width:10px;height:9px;background:#e4e4e4;border:1px solid #999;font-size:6px;line-height:7px;font-weight:bold;color:#333;font-family:'Liberation Mono',monospace">&gt;_</div>
<div class="a" style="left:311px;top:427px;border:2px solid transparent;border-top:2.500px solid #555;border-bottom:0"></div>
<div class="a" style="left:320px;top:423px;font-family:'Liberation Mono','DejaVu Sans Mono',monospace;font-size:7.200px;line-height:10px;font-style:italic;color:#999">Type a command</div>
<!-- STATUS BAR -->
<div class="a" style="left:0;top:434px;width:620px;height:12px;background:#757575;border-top:1.500px solid #4a4a4a"></div>
<div class="a" style="left: 7.7px; top: 436.5px; font-size: 8.2px; line-height: 10px; color: rgb(17, 17, 17); transform: scaleX(0.821); transform-origin: 0px 0px;">3573.3299, 1795.9729, 0.0000</div>
<div class="a" style="left:607px;top:437px;width:8px;height:8px;background:#ddd;border:1px solid #333"></div>
<div class="a" style="left:609px;top:439px;width:4px;height:4px;background:linear-gradient(45deg,#ddd 50%,#333 50%)"></div>
<div class="a sbb" style="left:125.7px;width:22.7px"></div>
<div class="a sbt" style="left: 125.7px; width: 22.7px; transform: scaleX(0.745); transform-origin: 50% 0px;">INFER</div>
<div class="a sbb" style="left:149.7px;width:20.6px"></div>
<div class="a sbt" style="left: 149.7px; width: 20.6px; transform: scaleX(0.734); transform-origin: 50% 0px;">SNAP</div>
<div class="a sbb on" style="left:171.6px;width:19.9px"></div>
<div class="a sbt on" style="left: 171.6px; width: 19.9px; transform: scaleX(0.729); transform-origin: 50% 0px;">GRID</div>
<div class="a sbb" style="left:192.8px;width:26.6px"></div>
<div class="a sbt" style="left: 192.8px; width: 26.6px; transform: scaleX(0.72); transform-origin: 50% 0px;">ORTHO</div>
<div class="a sbb" style="left:220.6px;width:25.1px"></div>
<div class="a sbt" style="left: 220.6px; width: 25.1px; transform: scaleX(0.746); transform-origin: 50% 0px;">POLAR</div>
<div class="a sbb on" style="left:247.0px;width:26.5px"></div>
<div class="a sbt on" style="left: 247px; width: 26.5px; transform: scaleX(0.722); transform-origin: 50% 0px;">OSNAP</div>
<div class="a sbb" style="left:274.0px;width:33.6px"></div>
<div class="a sbt" style="left: 274px; width: 33.6px; transform: scaleX(0.738); transform-origin: 50% 0px;">3DOSNAP</div>
<div class="a sbb on" style="left:309.0px;width:31.4px"></div>
<div class="a sbt on" style="left: 309px; width: 31.4px; transform: scaleX(0.819); transform-origin: 50% 0px;">OTRACK</div>
<div class="a sbb" style="left:341.4px;width:20.0px"></div>
<div class="a sbt" style="left: 341.4px; width: 20px; transform: scaleX(0.722); transform-origin: 50% 0px;">DUCS</div>
<div class="a sbb" style="left:362.7px;width:16.3px"></div>
<div class="a sbt" style="left: 362.7px; width: 16.3px; transform: scaleX(0.752); transform-origin: 50% 0px;">DYN</div>
<div class="a sbb" style="left:380.5px;width:17.5px"></div>
<div class="a sbt" style="left: 380.5px; width: 17.5px; transform: scaleX(0.838); transform-origin: 50% 0px;">LWT</div>
<div class="a sbb" style="left:399.4px;width:16.0px"></div>
<div class="a sbt" style="left: 399.4px; width: 16px; transform: scaleX(0.811); transform-origin: 50% 0px;">TPY</div>
<div class="a sbb on" style="left:416.5px;width:11.5px"></div>
<div class="a sbt on" style="left: 416.5px; width: 11.5px; transform: scaleX(0.762); transform-origin: 50% 0px;">SC</div>
<div class="a sbb" style="left:429.0px;width:12.5px"></div>
<div class="a sbt" style="left: 429px; width: 12.5px; transform: scaleX(0.824); transform-origin: 50% 0px;">AM</div>
</body></html>
